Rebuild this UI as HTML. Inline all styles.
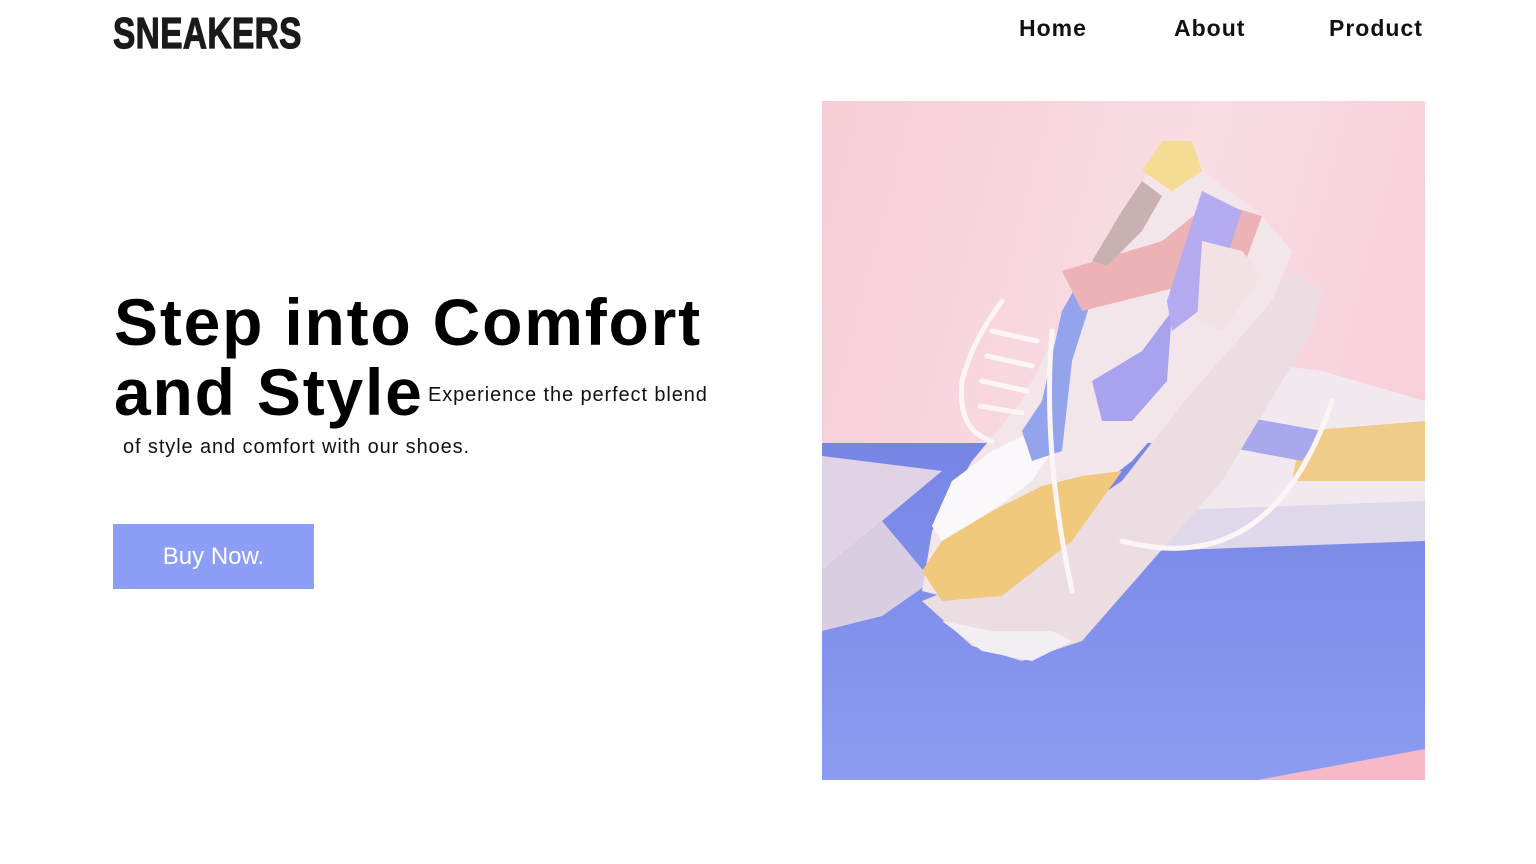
<!DOCTYPE html>
<html><head><meta charset="utf-8"><style>
*{margin:0;padding:0;box-sizing:border-box}
body{width:1536px;height:864px;background:#fff;position:relative;overflow:hidden;font-family:"Liberation Sans",sans-serif;color:#000}
.logo{position:absolute;left:113px;top:9px;font-weight:bold;font-size:44px;color:#1a1a1a;transform:scaleX(0.76);transform-origin:left;-webkit-text-stroke:1.2px #1a1a1a;letter-spacing:0.5px}
.nav a{position:absolute;top:15px;font-weight:bold;font-size:23px;color:#111;text-decoration:none;letter-spacing:1px}
.h{position:absolute;left:114px;font-weight:bold;font-size:66px;letter-spacing:1.8px;white-space:nowrap}
.s{position:absolute;font-size:20px;color:#111;white-space:nowrap;letter-spacing:0.9px}
.btn{position:absolute;left:113px;top:524px;width:201px;height:65px;background:#8c9ef5;color:#fff;font-size:24px;text-align:center;line-height:65px}
.img{position:absolute;left:822px;top:101px;width:603px;height:679px;overflow:hidden}
</style></head><body>
<div class="logo">SNEAKERS</div>
<div class="nav"><a style="left:1019px">Home</a><a style="left:1174px">About</a><a style="left:1329px">Product</a></div>
<div class="h" style="top:284px">Step into Comfort</div>
<div class="h" style="top:354px">and Style</div>
<div class="s" style="left:428px;top:384px">Experience the perfect blend</div>
<div class="s" style="left:123px;top:436px">of style and comfort with our shoes.</div>
<div class="btn">Buy Now.</div>
<div class="img"><svg width="603" height="679" viewBox="0 0 603 679">
<defs><linearGradient id="bg" x1="0" y1="0" x2="1" y2="0.3"><stop offset="0" stop-color="#f6cdd6"/><stop offset="0.6" stop-color="#f9dde4"/><stop offset="1" stop-color="#f8d0da"/></linearGradient>
<linearGradient id="fl" x1="0" y1="0" x2="0" y2="1"><stop offset="0" stop-color="#7785e4"/><stop offset="1" stop-color="#8b9cf2"/></linearGradient></defs>
<rect width="603" height="679" fill="url(#bg)"/>
<path d="M0 342 L603 342 L603 679 L0 679Z" fill="url(#fl)"/>
<path d="M0 355 L120 370 L60 420 L0 470Z" fill="#e0d3e6"/>
<path d="M0 470 L60 420 L110 480 L60 515 L0 530Z" fill="#d9cde2"/>
<path d="M435 679 L603 648 L603 679Z" fill="#f7b8c8"/>
<!-- background shoe -->
<path d="M330 410 L603 390 L603 440 L330 450Z" fill="#ded8ea"/>
<path d="M330 330 L420 260 L500 270 L603 300 L603 400 L330 410Z" fill="#f2e8ef"/>
<path d="M480 330 L603 320 L603 380 L470 380Z" fill="#efcc88"/>
<path d="M390 310 L500 330 L480 360 L400 345Z" fill="#a9a8ee"/>
<path d="M380 240 L430 250 L440 300 L385 300Z" fill="#eab3bd"/>
<!-- main shoe sole -->
<path d="M100 500 L150 545 L200 560 L260 540 L400 380 L490 230 L500 190 L470 170 L440 200 L300 380 L150 480Z" fill="#ecdde2"/>
<path d="M120 520 L160 550 L210 560 L250 540 L230 530 L170 530Z" fill="#f3eef3"/>
<!-- upper -->
<path d="M100 490 L110 430 L150 360 L200 300 L240 220 L290 160 L330 60 L350 45 L400 85 L440 115 L470 150 L450 200 L310 360 L170 470 L140 500Z" fill="#f3e6ea"/>
<path d="M100 470 L120 440 L160 415 L220 385 L260 375 L300 370 L250 440 L180 495 L120 500Z" fill="#f0c97d"/>
<path d="M110 425 L130 380 L170 350 L200 335 L230 350 L210 380 L170 410 L120 440Z" fill="#fbf8fb"/>
<path d="M200 330 L220 300 L240 210 L260 175 L280 165 L250 260 L240 350 L210 360Z" fill="#93a3ec"/>
<path d="M240 170 L340 140 L390 100 L440 115 L420 170 L300 200 L260 210Z" fill="#edb2b6"/>
<path d="M320 70 L340 40 L370 40 L380 70 L350 90Z" fill="#f4dc93"/>
<path d="M270 160 L300 110 L320 80 L340 95 L320 130 L285 165Z" fill="#c9b0b3"/>
<path d="M270 280 L320 250 L350 210 L345 280 L310 320 L280 320Z" fill="#a9a3ef"/>
<path d="M380 90 L420 110 L390 200 L350 230 L345 200Z" fill="#b3aaf0"/>
<path d="M380 140 L420 150 L440 175 L400 230 L375 220Z" fill="#f2e2e4"/>
<g stroke="#fbf6f5" stroke-width="5" fill="none" stroke-linecap="round">
<path d="M180 200 Q150 240 140 280 Q135 330 170 340"/>
<path d="M170 230 L215 240 M165 255 L210 265 M160 280 L205 290 M158 305 L200 312"/>
<path d="M230 230 Q220 350 250 490"/>
<path d="M300 440 Q450 480 510 300"/>
</g>
</svg></div>
</body></html>
